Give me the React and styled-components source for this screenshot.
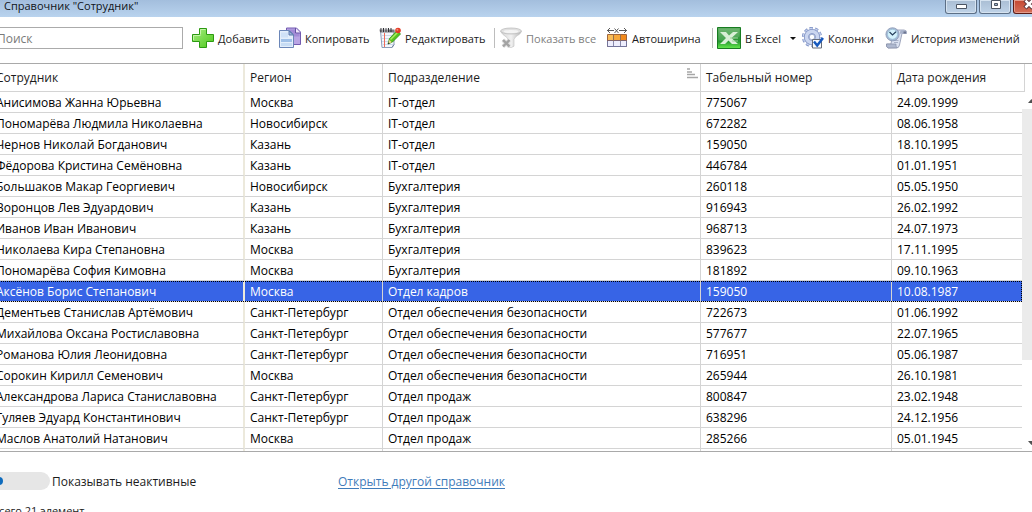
import React, { useState } from "react";
import styled, { createGlobalStyle, css } from "styled-components";

const Global = createGlobalStyle`
  *, *::before, *::after { box-sizing: border-box; }
  html, body { margin: 0; height: 100%; overflow: hidden; background: #fff; }
  body, button, input { font-family: "Open Sans", "Noto Sans", sans-serif; }
`;

const Window = styled.main`
  margin: 0 -8px;
  color: #1b1b1b;
  font-size: 12px;
`;

const TitleBar = styled.header`
  display: flex;
  justify-content: space-between;
  height: 17px;
  padding: 0 0 0 12px;
  background: linear-gradient(#a3bedd, #b9d3ee);
`;

const Title = styled.h1`
  margin: 0;
  font-size: 11px;
  font-weight: 400;
  line-height: 12px;
  color: #101418;
  white-space: nowrap;
`;

const WindowButtons = styled.div`
  display: flex;
  gap: 2px;
  margin-right: -5px;
`;

const WindowButton = styled.button`
  display: flex;
  justify-content: center;
  width: 32px;
  height: 14px;
  padding: 0;
  border: 1px solid ${(p) => (p.$close ? "#5b1a14" : "#5c6f86")};
  border-top: 0;
  border-radius: 0 0 3px 3px;
  background: ${(p) =>
    p.$close ? "linear-gradient(#c4462f, #d4705a)" : "linear-gradient(#a9bdd3, #bfd3e8)"};
  box-shadow: inset 0 0 0 1px ${(p) => (p.$close ? "#e39c8c" : "#d6e3f0")};
`;

const Toolbar = styled.div`
  display: flex;
  align-items: center;
  height: 46px;
  padding: 0 0 4px 4px;
`;

const Search = styled.input`
  width: 187px;
  height: 22px;
  margin-right: 9px;
  padding: 0;
  border: 1px solid #ababab;
  font-size: 12px;
  color: #1b1b1b;
  background: #fff;
  &::placeholder { color: #7a7a7a; opacity: 1; }
`;

const ToolButton = styled.button`
  display: flex;
  align-items: center;
  flex: none;
  gap: 4px;
  width: ${(p) => p.$width}px;
  height: 26px;
  padding: 0;
  border: 0;
  background: none;
  font-size: 11px;
  color: #1b1b1b;
  white-space: nowrap;
  &:disabled { color: #808080; }
`;

const Icon = styled.svg`
  flex: none;
  display: block;
`;

const Separator = styled.div`
  flex: none;
  width: 1px;
  height: 20px;
  margin-right: ${(p) => p.$gap}px;
  background: #bdbdbd;
`;

const Grid = styled.section`
  display: flex;
  border: solid #a9a9a9;
  border-width: 1px 0;
`;

const Table = styled.table`
  flex: 1;
  width: 100%;
  min-width: 0;
  table-layout: fixed;
  border-collapse: separate;
  border-spacing: 0;
`;

const cell = css`
  padding: 0 2px 0 5px;
  border-right: 1px solid #d4d4d4;
  border-bottom: 1px solid #d4d4d4;
  text-align: left;
  font-weight: 400;
  white-space: nowrap;
  overflow: hidden;
  &:first-child { padding-left: 4px; border-right: 2px solid #ece9dc; }
  &:last-child { border-right: 0; }
`;

const HeadCell = styled.th`
  ${cell}
  height: 28px;
  color: #1b1b1b;
`;

const HeadLabel = styled.div`
  display: flex;
  justify-content: space-between;
  height: 20px;
  line-height: 20px;
`;

const Cell = styled.td`
  ${cell}
  height: 21px;
  padding-top: 2px;
  line-height: 18px;
  color: #000;
`;

const Row = styled.tr`
  ${(p) =>
    p.$selected &&
    css`
      outline: 1px dotted #000;
      outline-offset: -1px;
      background: #3764e6;
      ${Cell} { color: #fff; }
    `}
`;

const RestCell = styled.td`
  ${cell}
  height: 2px;
  border-bottom: 0;
`;

const ScrollColumn = styled.div`
  display: flex;
  flex-direction: column;
  flex: none;
  width: 18px;
`;

const ScrollHead = styled.div`
  width: 3px;
  height: 28px;
  border: solid #d4d4d4;
  border-width: 0 1px 1px 0;
`;

const ScrollArrow = styled.button`
  display: flex;
  align-items: center;
  justify-content: center;
  height: 17px;
  padding: 0;
  border: 0;
  background: none;
`;

const ScrollTrack = styled.div`
  flex: 1;
`;

const ScrollThumb = styled.div`
  height: 251px;
  background: #ebebeb;
`;

const Options = styled.div`
  display: flex;
  align-items: center;
  height: 20px;
  margin-top: 19px;
`;

const SwitchLabel = styled.label`
  display: flex;
  align-items: center;
  gap: 2px;
  width: 346px;
`;

const Switch = styled.input`
  appearance: none;
  display: flex;
  align-items: center;
  width: 58px;
  height: 18px;
  margin: 0;
  padding: 0 3px;
  border-radius: 9px;
  background: #e6e6e6;
  &::before {
    content: "";
    width: 8px;
    height: 8px;
    border-radius: 50%;
    background: #0f6cbd;
  }
  &:checked { justify-content: flex-end; }
`;

const Link = styled.a`
  color: #3f7cba;
  text-underline-offset: 2px;
`;

const Status = styled.p`
  margin: 12px 0 0;
  font-size: 11px;
  line-height: 16px;
`;

function AddIcon() {
  return (
    <Icon width="22" height="22" viewBox="0 0 22 22">
      <defs>
        <linearGradient id="add" x2="1" y2="1">
          <stop offset="0" stopColor="#a9ee84" /><stop offset="1" stopColor="#4cc81a" />
        </linearGradient>
      </defs>
      <path d="M7.500 1.500h7v6h7v7h-7v6h-7v-6h-7v-7h7z" fill="url(#add)" stroke="#2c9a12" />
      <path d="M8.500 7.500v-5h5M1.500 13V8.500h7" fill="none" stroke="#c6f5ab" />
    </Icon>
  );
}

function CopyIcon() {
  return (
    <Icon width="22" height="22" viewBox="0 0 22 22">
      <path d="M7.500 1h10l4 4v12.500h-14z" fill="#b9a4e4" stroke="#735bb0" />
      <path d="M9 2.500h7v4h4.500v3H9z" fill="#a28bd6" />
      <path d="M16.500 1v5h5" fill="#eee8fb" stroke="#6650a5" />
      <path d="M.5 3.500h10l4 4v13H.5z" fill="#e3eefb" stroke="#6b86b8" />
      <path d="M10 4v4h4.500z" fill="#9eb5dc" stroke="#5d78ac" />
      <path d="M2 12h11v3H2z" fill="#9fc0e8" />
      <path d="M2 16h11v3H2z" fill="#c7dcf4" />
      <path d="M2 5.500h7v5H2z" fill="#cfe1f7" />
    </Icon>
  );
}

function EditIcon() {
  return (
    <Icon width="22" height="22" viewBox="0 0 22 22">
      <path d="M1.500 3.500h13.500v14l-2 3H3z" fill="#f4f7fc" stroke="#8c9cb8" />
      <path d="M13 20.500l2-3" stroke="#69799a" />
      <path d="M3 8.500h11M3 11.500h11M3 14.500h11M4 17.500h10" stroke="#cbd8ea" />
      <path d="M5.500 6v14" stroke="#ef6a58" />
      <path d="M.5 2.500h15v3H1z" fill="#77767c" />
      <path d="M2 1v4M4.500 1v4M7 1v4M9.500 1v4M12 1v4" stroke="#2f3034" />
      <path d="M3.200 1v4M5.800 1v4M8.200 1v4" stroke="#d8d8dc" strokeWidth=".7" />
      <path d="M9 17l1.500-5.500 7.500-8 3.500 3.500-8 8z" fill="#58c41c" stroke="#2c8a10" strokeWidth=".8" />
      <path d="M11.500 12.500l7-7" stroke="#a9ec63" strokeWidth="1.400" />
      <path d="M9 17l1.300-4.200 2.500 2.500z" fill="#f0cf93" />
      <path d="M8.800 17.200l.8-1.900 1.100 1.100z" fill="#1d1d1d" />
      <circle cx="19" cy="3.500" r="2.800" fill="#e33b26" />
      <circle cx="18.400" cy="2.800" r="1" fill="#f68a75" />
    </Icon>
  );
}

function FilterIcon() {
  return (
    <Icon width="22" height="22" viewBox="0 0 22 22">
      <defs>
        <linearGradient id="funnel">
          <stop offset="0" stopColor="#d2d2d2" /><stop offset=".5" stopColor="#f1f1f1" /><stop offset="1" stopColor="#b4b4b4" />
        </linearGradient>
      </defs>
      <path d="M.6 4.500C3 9 7.500 9.500 8 12.500v7.500q3.500 1.500 6-.8v-6.700c1-4 6-4 7.500-8z" fill="url(#funnel)" stroke="#c0c0c0" strokeWidth=".6" />
      <ellipse cx="11" cy="4" rx="10.400" ry="3" fill="#e0e0e0" stroke="#bebebe" strokeWidth=".8" />
      <ellipse cx="11" cy="4.500" rx="7.500" ry="1.600" fill="#f4f4f4" />
      <path d="M3 13l6.500 6.500M9.500 13L3 19.500" stroke="#dedede" strokeWidth="4" />
      <path d="M3 13l6.500 6.500M9.500 13L3 19.500" stroke="#a3a3a3" strokeWidth="2.400" />
    </Icon>
  );
}

function AutoWidthIcon() {
  return (
    <Icon width="22" height="22" viewBox="0 0 22 22">
      <path d="M1 3.500h7M13 3.500h8M4 1L1.500 3.500 4 6M18 1l2.500 2.500L18 6M8.500 1.500l4 4.500M12.500 1.500l-4 4.500" fill="none" stroke="#5a5a5a" />
      <path d="M1.500 7.500h19v12h-19z" fill="#eeeefd" stroke="#a0653a" />
      <path d="M2 8h6v5H2z" fill="#f9bd58" />
      <path d="M8 8h6v5H8z" fill="#f7a93c" />
      <path d="M14 8h6v5h-6z" fill="#f28a1b" />
      <path d="M1.500 13.500h19" stroke="#7c6370" />
      <path d="M7.500 7.500v12M14.500 7.500v12" stroke="#96714f" />
      <path d="M1.500 14v5.500h19V14" fill="none" stroke="#74759c" />
      <path d="M7.500 14v5M14.500 14v5" stroke="#8989ab" />
    </Icon>
  );
}

function ExcelIcon() {
  return (
    <Icon width="24" height="22" viewBox="0 0 24 22">
      <defs>
        <linearGradient id="excel" x2="0" y2="1">
          <stop offset="0" stopColor="#59a95c" /><stop offset=".65" stopColor="#259531" /><stop offset="1" stopColor="#66ec4d" />
        </linearGradient>
      </defs>
      <path d="M.5.5h23v21H.5z" fill="url(#excel)" stroke="#187c21" />
      <path d="M1.500 1.500h21v8q-10 5-21 4z" fill="#fff" opacity=".14" />
      <path d="M3 5h6l3 3.500L16 5h5l-6.500 6 6.500 6h-6l-3.500-3.500L8 17H3l6-6z" fill="#d9efd7" />
      <path d="M13 11h8M15 14h6" stroke="#9dd09d" />
    </Icon>
  );
}

function ColumnsIcon() {
  return (
    <Icon width="22" height="22" viewBox="0 0 22 22">
      <circle cx="10" cy="10" r="8.300" fill="none" stroke="#8194c6" strokeWidth="3.600" strokeDasharray="3.200 2.015" />
      <circle cx="10" cy="10" r="8.300" fill="none" stroke="#c6d2ee" strokeWidth="2" strokeDasharray="2.600 2.615" strokeDashoffset="-.3" />
      <circle cx="10" cy="10" r="5.600" fill="none" stroke="#8294c4" strokeWidth="5" />
      <circle cx="10" cy="10" r="5.500" fill="none" stroke="#cbd6f0" strokeWidth="3.600" />
      <circle cx="10" cy="10" r="2.800" fill="#fff" stroke="#7e91c2" strokeWidth=".8" />
      <path d="M10.500 12.500h9v8.500h-9z" fill="#f7faff" stroke="#656b78" />
      <path d="M12 14.500l3.200 4L21 11" fill="none" stroke="#1658bd" strokeWidth="2.500" />
    </Icon>
  );
}

function HistoryIcon() {
  return (
    <Icon width="22" height="22" viewBox="0 0 22 22">
      <path d="M8 3h11q3 0 2.500 3.500H17L14.500 18q-.5 3-3 3H3q-2-1-1.500-4H6z" fill="#dbe2f1" stroke="#8a93ad" strokeWidth=".8" />
      <path d="M16 3.200q-1.500 1-1 3.600h6.300q.6-3.400-2-3.600z" fill="#a8b2ca" />
      <path d="M18.500 4.500h2.500v2h-2.500z" fill="#6c7590" />
      <path d="M1.500 17H11q-.5 2.500 1.200 3.700L3 21q-2-1-1.500-4z" fill="#aeb8cf" stroke="#8189a2" strokeWidth=".6" />
      <path d="M9 15.500h4M9.500 13.500h4" stroke="#a8b1c8" />
      <circle cx="7.500" cy="7.300" r="6.600" fill="#a9bad3" stroke="#7f91b0" strokeWidth=".7" />
      <circle cx="7.500" cy="7.300" r="5" fill="#d5f2fc" stroke="#91b9d4" strokeWidth=".7" />
      <path d="M4.500 5l3 3L11 4.800" fill="none" stroke="#26405c" strokeWidth="1.200" />
    </Icon>
  );
}

function SortIcon() {
  return (
    <Icon width="11" height="11" viewBox="0 0 11 11">
      <path d="M0 1h3M0 4h5M0 6.500h8M0 9.500h11" stroke="#a6a6a6" strokeWidth="1.500" />
    </Icon>
  );
}

const columns = [
  { name: "Сотрудник", width: 253 },
  { name: "Регион", width: 138 },
  { name: "Подразделение", sorted: true },
  { name: "Табельный номер", width: 191 },
  { name: "Дата рождения", width: 130 },
];

const IT = "IT-отдел";
const ACC = "Бухгалтерия";
const SEC = "Отдел обеспечения безопасности";
const SALES = "Отдел продаж";
const SPB = "Санкт-Петербург";

const employees = [
  ["Анисимова Жанна Юрьевна", "Москва", IT, "775067", "24.09.1999"],
  ["Пономарёва Людмила Николаевна", "Новосибирск", IT, "672282", "08.06.1958"],
  ["Чернов Николай Богданович", "Казань", IT, "159050", "18.10.1995"],
  ["Фёдорова Кристина Семёновна", "Казань", IT, "446784", "01.01.1951"],
  ["Большаков Макар Георгиевич", "Новосибирск", ACC, "260118", "05.05.1950"],
  ["Воронцов Лев Эдуардович", "Казань", ACC, "916943", "26.02.1992"],
  ["Иванов Иван Иванович", "Казань", ACC, "968713", "24.07.1973"],
  ["Николаева Кира Степановна", "Москва", ACC, "839623", "17.11.1995"],
  ["Пономарёва София Кимовна", "Москва", ACC, "181892", "09.10.1963"],
  ["Аксёнов Борис Степанович", "Москва", "Отдел кадров", "159050", "10.08.1987"],
  ["Дементьев Станислав Артёмович", SPB, SEC, "722673", "01.06.1992"],
  ["Михайлова Оксана Ростиславовна", SPB, SEC, "577677", "22.07.1965"],
  ["Романова Юлия Леонидовна", SPB, SEC, "716951", "05.06.1987"],
  ["Сорокин Кирилл Семенович", "Москва", SEC, "265944", "26.10.1981"],
  ["Александрова Лариса Станиславовна", SPB, SALES, "800847", "23.02.1948"],
  ["Гуляев Эдуард Константинович", SPB, SALES, "638296", "24.12.1956"],
  ["Маслов Анатолий Натанович", "Москва", SALES, "285266", "05.01.1945"],
];

export default function App() {
  const [selected, setSelected] = useState(9);
  return (
    <>
      <Global />
      <Window>
        <TitleBar>
          <Title>Справочник "Сотрудник"</Title>
          <WindowButtons>
            <WindowButton aria-label="Свернуть">
              <Icon width="13" height="12" viewBox="0 0 13 12">
                <path d="M1.500 4.500h10v4h-10z" fill="#fff" stroke="#4b5563" />
              </Icon>
            </WindowButton>
            <WindowButton aria-label="Развернуть">
              <Icon width="13" height="12" viewBox="0 0 13 12">
                <path d="M2.500.5h9v8h-9z" fill="#fff" stroke="#4b5563" />
                <path d="M5.500 3.500h3v2h-3z" fill="#9db3cb" stroke="#4b5563" />
              </Icon>
            </WindowButton>
            <WindowButton $close aria-label="Закрыть">
              <Icon width="14" height="12" viewBox="0 0 14 12">
                <path d="M3 0l8 8M11 0L3 8" stroke="#54343a" strokeWidth="4.500" />
                <path d="M3.500 .5l7 7M10.500 .5l-7 7" stroke="#fff" strokeWidth="2.500" />
              </Icon>
            </WindowButton>
          </WindowButtons>
        </TitleBar>

        <Toolbar>
          <Search placeholder="Поиск" aria-label="Поиск" />
          <ToolButton $width={87}><AddIcon />Добавить</ToolButton>
          <ToolButton $width={100}><CopyIcon />Копировать</ToolButton>
          <ToolButton $width={115}><EditIcon />Редактировать</ToolButton>
          <Separator $gap={5} />
          <ToolButton $width={106} disabled><FilterIcon />Показать все</ToolButton>
          <ToolButton $width={106}><AutoWidthIcon />Автоширина</ToolButton>
          <Separator $gap={4} />
          <ToolButton $width={73}><ExcelIcon />В Excel</ToolButton>
          <ToolButton $width={12} aria-label="Варианты выгрузки">
            <Icon width="6" height="3" viewBox="0 0 6 3"><path d="M0 0h6L3 3z" fill="#111" /></Icon>
          </ToolButton>
          <ToolButton $width={83}><ColumnsIcon />Колонки</ToolButton>
          <ToolButton $width={140}><HistoryIcon />История изменений</ToolButton>
        </Toolbar>

        <Grid>
          <Table>
            <colgroup>
              {columns.map((c) => <col key={c.name} width={c.width} />)}
            </colgroup>
            <thead>
              <tr>
                {columns.map((c) => (
                  <HeadCell key={c.name} scope="col">
                    <HeadLabel>{c.name}{c.sorted && <SortIcon />}</HeadLabel>
                  </HeadCell>
                ))}
              </tr>
            </thead>
            <tbody>
              {employees.map((row, i) => (
                <Row key={row[0]} $selected={i === selected} onClick={() => setSelected(i)}>
                  {row.map((value, j) => <Cell key={j}>{value}</Cell>)}
                </Row>
              ))}
              <tr aria-hidden="true">
                {columns.map((c) => <RestCell key={c.name} />)}
              </tr>
            </tbody>
          </Table>
          <ScrollColumn>
            <ScrollHead />
            <ScrollArrow aria-label="Вверх">
              <Icon width="7" height="4" viewBox="0 0 7 4"><path d="M0 4h7L3.500 0z" fill="#505050" /></Icon>
            </ScrollArrow>
            <ScrollTrack><ScrollThumb /></ScrollTrack>
            <ScrollArrow aria-label="Вниз">
              <Icon width="7" height="4" viewBox="0 0 7 4"><path d="M0 0h7L3.500 4z" fill="#505050" /></Icon>
            </ScrollArrow>
          </ScrollColumn>
        </Grid>

        <Options>
          <SwitchLabel><Switch type="checkbox" role="switch" />Показывать неактивные</SwitchLabel>
          <Link href="#catalogs">Открыть другой справочник</Link>
        </Options>
        <Status>Всего 21 элемент</Status>
      </Window>
    </>
  );
}
